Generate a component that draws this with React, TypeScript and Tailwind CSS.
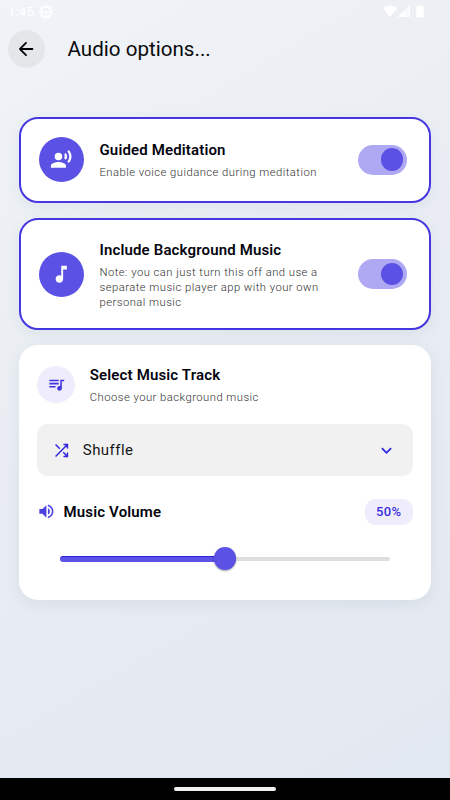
import React from "react";
import {
  MdKeyboardArrowDown,
  MdMusicNote,
  MdQueueMusic,
  MdRecordVoiceOver,
  MdVolumeUp,
} from "react-icons/md";

const StatusBar = () => {
  return (
    <div className="h-[23px] flex items-center justify-between pl-2 pr-[25px] text-white">
      <div className="flex items-center gap-[5px]">
        <span className="text-[13.500px] leading-none">1:45</span>
        <svg width="14" height="14" viewBox="0 0 14 14" fill="none">
          <circle cx="7" cy="7" r="5" stroke="white" strokeWidth="1.6" />
          <circle cx="7" cy="7" r="6.2" stroke="white" strokeWidth="1.2" strokeDasharray="1.9 1.3" />
          <path d="M2 7h10M7 7v5" stroke="white" strokeWidth="1.3" />
        </svg>
      </div>
      <svg width="42" height="13" viewBox="0 0 42 13" fill="white">
        <path d="M0 3.2C4 -.2 10 -.2 14 3.2L7 12z" />
        <path d="M27 0v12H15z" opacity=".6" />
        <path d="M22 5v7h-7z" />
        <path d="M27 0v12h-1V1z" />
        <path d="M35.500 0h3v1.300h2.200v11h-7.400v-11h2.200z" />
      </svg>
    </div>
  );
};

const BackIcon = () => (
  <svg width="22" height="22" viewBox="0 0 24 24" fill="currentColor">
    <path d="M19 11H7.830l4.880-4.880c.39-.39.39-1.030 0-1.420-.39-.39-1.020-.39-1.410 0l-6.590 6.590c-.39.39-.39 1.020 0 1.410l6.590 6.590c.39.39 1.020.39 1.410 0 .39-.39.39-1.020 0-1.410L7.830 13H19c.55 0 1-.45 1-1s-.45-1-1-1z" />
  </svg>
);

const ShuffleIcon = () => (
  <svg
    width="19"
    height="19"
    viewBox="0 0 24 24"
    fill="none"
    stroke="currentColor"
    strokeWidth="1.8"
  >
    <path d="M4.500 19.500 19.500 4.500M4.500 4.500l5.300 5.300M14.200 14.200l5.300 5.300M14.500 4.500h5v5M14.500 19.500h5v-5" />
  </svg>
);

const Toggle = () => {
  return (
    <button
      type="button"
      role="switch"
      aria-checked="true"
      className="w-[49px] h-[30px] shrink-0 rounded-full bg-[#aea9f2] flex items-center justify-end pr-1"
    >
      <span className="size-[22.500px] rounded-full bg-[#5b52e5]" />
    </button>
  );
};

type OptionCardProps = {
  icon: React.ReactNode;
  title: string;
  text: string;
  className: string;
};

const OptionCard = ({ icon, title, text, className }: OptionCardProps) => {
  return (
    <section
      className={`flex items-center rounded-[19px] border-2 border-[#4436e0] bg-white pl-[18.200px] pr-[22px] shadow-[0_4px_14px_rgba(90,110,130,0.09)] ${className}`}
    >
      <div className="size-[45px] shrink-0 rounded-full bg-[#5b52e5] text-white flex items-center justify-center">
        {icon}
      </div>
      <div className="ml-[15.300px] mt-[2px] flex-1">
        <h2 className="text-[15px] leading-[18px] font-semibold tracking-[0.15px] text-[#05050f]">
          {title}
        </h2>
        <p className="mt-[6px] w-[240px] text-[11.250px] leading-[15px] font-light tracking-[0.47px] text-[#303030]">
          {text}
        </p>
      </div>
      <Toggle />
    </section>
  );
};

const App = () => {
  return (
    <main className="h-[800px] w-[450px] flex flex-col overflow-hidden bg-[linear-gradient(150deg,#f0f4f8_0%,#e9edf3_45%,#e2e8f1_100%)] font-['Roboto',sans-serif]">
      <StatusBar />
      <header className="mt-[7px] flex items-center pl-[7.500px]">
        <button
          type="button"
          className="size-[37.500px] rounded-full bg-[#e3e7ea] flex items-center justify-center text-black"
        >
          <BackIcon />
        </button>
        <h1 className="ml-[22.500px] text-[20.600px] leading-6 text-[#0a0a0c]">
          Audio options...
        </h1>
      </header>

      <div className="mt-[49px] px-[19px] flex flex-col">
        <OptionCard
          className="h-[86px]"
          icon={<MdRecordVoiceOver size={22.5} />}
          title="Guided Meditation"
          text="Enable voice guidance during meditation"
        />
        <OptionCard
          className="mt-[15.500px] h-[112px]"
          icon={<MdMusicNote size={22.5} />}
          title="Include Background Music"
          text="Note: you can just turn this off and use a separate music player app with your own personal music"
        />

        <section className="mt-[15px] h-[255px] rounded-[19px] bg-white px-[18.300px] pt-[19px] shadow-[0_4px_14px_rgba(90,110,130,0.10)]">
          <div className="flex items-center">
            <div className="size-[37.500px] rounded-full bg-[#efedfc] text-[#3f33e0] flex items-center justify-center">
              <MdQueueMusic size={18.75} />
            </div>
            <div className="ml-[15px] mt-[2px]">
              <h2 className="text-[15px] leading-[18px] font-semibold tracking-[0.15px] text-[#05050f]">
                Select Music Track
              </h2>
              <p className="mt-[6px] text-[11.250px] leading-[15px] font-light tracking-[0.47px] text-[#303030]">
                Choose your background music
              </p>
            </div>
          </div>

          <button
            type="button"
            className="mt-[19px] h-[52px] w-full rounded-[11px] bg-[#f1f1f1] pl-[15px] pr-[16px] flex items-center text-[#3024df]"
          >
            <ShuffleIcon />
            <span className="ml-[11.500px] flex-1 text-left text-[15px] tracking-[0.45px] text-[#161616]">
              Shuffle
            </span>
            <MdKeyboardArrowDown size={21} />
          </button>

          <div className="mt-[22.700px] flex items-center">
            <MdVolumeUp size={18.75} className="text-[#4b40e2]" />
            <h2 className="ml-[7.500px] flex-1 text-[15px] leading-[18px] font-semibold tracking-[0.15px] text-[#05050f]">
              Music Volume
            </h2>
            <span className="h-[26px] w-[48px] rounded-[11px] bg-[#efedfc] flex items-center justify-center text-[13px] font-medium tracking-[0.4px] text-[#3a2dd8]">
              50%
            </span>
          </div>

          <div className="mt-[22.800px] px-[22.500px] flex items-center">
            <div className="h-[5.600px] flex-1 rounded-l-full bg-[#5b52e5] border-t border-[#2d20dd]" />
            <div className="-mx-[11.250px] z-10 size-[22.500px] rounded-full bg-[#5b52e5] shadow-[0_1px_2px_rgba(0,0,0,0.35)]" />
            <div className="h-[3.750px] flex-1 rounded-r-full bg-[#dedede]" />
          </div>
        </section>
      </div>

      <footer className="mt-auto h-[22.500px] bg-black flex items-center justify-center">
        <div className="h-1 w-[102px] rounded-full bg-[#f0f0f0]" />
      </footer>
    </main>
  );
};

export default App;
